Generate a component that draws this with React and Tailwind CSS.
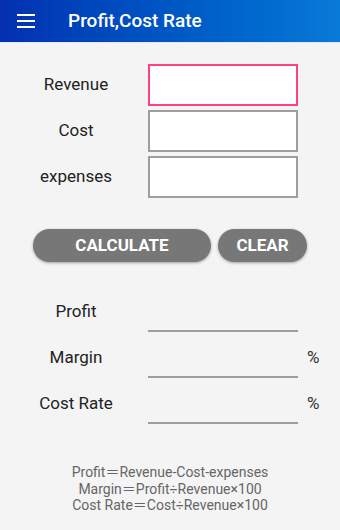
import React from "react";

const font = { fontFamily: "Roboto, 'Noto Sans CJK JP', 'Liberation Sans', sans-serif" };

function InputRow({ label, active }) {
  return (
    <div className="flex items-center h-[42px]">
      <div className="w-[148px] pl-[4px] text-center text-[17px] text-[#222]">{label}</div>
      <div
        className={
          "w-[150px] h-[42px] bg-white " +
          (active ? "border-2 border-[#ff4081]" : "border-2 border-[#9e9e9e]")
        }
      />
    </div>
  );
}

function ResultRow({ label, pct }) {
  return (
    <div className="flex items-end h-[42px]">
      <div className="w-[148px] pl-[4px] text-center text-[17px] text-[#222] self-center">{label}</div>
      <div className="w-[150px] h-[2px] bg-[#9e9e9e] mb-[1px]" />
      <div className="pl-[9px] text-[17px] text-[#333] self-center">{pct ? "%" : ""}</div>
    </div>
  );
}

export default function App() {
  return (
    <div className="w-[340px] h-[530px] bg-[#f4f4f4] flex flex-col" style={font}>
      <div className="h-[43px] flex items-center bg-gradient-to-r from-[#0530b0] to-[#0a7ad8] border-b border-[#e0e8f4]">
        <svg width="18" height="14" viewBox="0 0 18 14" className="ml-[17px]">
          <rect x="0" y="0" width="18" height="2" fill="white" />
          <rect x="0" y="6" width="18" height="2" fill="white" />
          <rect x="0" y="12" width="18" height="2" fill="white" />
        </svg>
        <div className="ml-[33px] text-white text-[19px] font-medium">Profit,Cost Rate</div>
      </div>

      <div className="flex flex-col gap-[4px] mt-[21px]">
        <InputRow label="Revenue" active />
        <InputRow label="Cost" />
        <InputRow label="expenses" />
      </div>

      <div className="flex gap-[7px] mt-[31px] ml-[33px]">
        <div className="w-[178px] h-[33px] rounded-full bg-[#777777] shadow-[0_1px_3px_rgba(0,0,0,0.35)] flex items-center justify-center text-white font-bold text-[17px]">
          CALCULATE
        </div>
        <div className="w-[89px] h-[33px] rounded-full bg-[#777777] shadow-[0_1px_3px_rgba(0,0,0,0.35)] flex items-center justify-center text-white font-bold text-[17px]">
          CLEAR
        </div>
      </div>

      <div className="flex flex-col gap-[4px] mt-[29px]">
        <ResultRow label="Profit" />
        <ResultRow label="Margin" pct />
        <ResultRow label="Cost Rate" pct />
      </div>

      <div className="mt-[39px] text-center text-[14px] leading-[16.5px] text-[#666]">
        <div>Profit＝Revenue-Cost-expenses</div>
        <div>Margin＝Profit÷Revenue×100</div>
        <div>Cost Rate＝Cost÷Revenue×100</div>
      </div>
    </div>
  );
}
